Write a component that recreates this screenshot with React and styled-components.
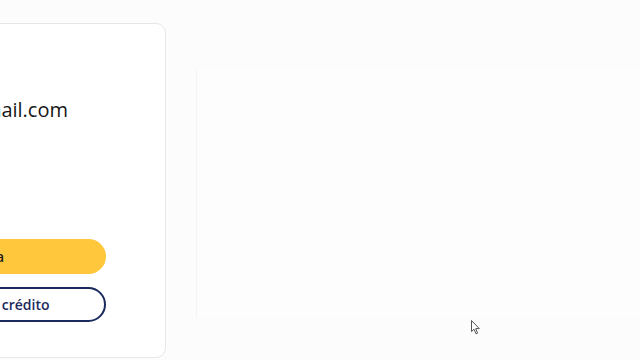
import React from "react";
import styled, { createGlobalStyle } from "styled-components";

const Global = createGlobalStyle`
  html, body {
    margin: 0;
    padding: 0;
    background: #fcfcfc;
    font-family: "Open Sans", "Liberation Sans", sans-serif;
    overflow: hidden;
  }
`;

const Page = styled.main`
  position: relative;
  width: 640px;
  height: 360px;
  display: flex;
  align-items: flex-start;
  padding-top: 23px;
  box-sizing: border-box;
  overflow: hidden;
`;

const Card = styled.section`
  flex: none;
  width: 421px;
  height: 335px;
  margin-left: -255px;
  box-sizing: border-box;
  background: #fff;
  border: 1px solid #e6e6e6;
  border-radius: 10px;
  padding: 72px 59px 35px 64px;
  display: flex;
  flex-direction: column;
`;

const Email = styled.p`
  margin: 0;
  padding-right: 38px;
  font-size: 20px;
  line-height: 28px;
  color: #161616;
  text-align: right;
`;

const Actions = styled.div`
  margin-top: auto;
  display: flex;
  flex-direction: column;
  gap: 13px;
`;

const Button = styled.button`
  height: 35px;
  border-radius: 18px;
  font-family: inherit;
  font-size: 14px;
  font-weight: 600;
  cursor: pointer;
  box-sizing: border-box;
  background: ${(p) => (p.$primary ? "#ffc73b" : "#fff")};
  color: ${(p) => (p.$primary ? "#1f1f1f" : "#1b2a5c")};
  border: ${(p) => (p.$primary ? "none" : "2px solid #1b2a5c")};
`;

const Panel = styled.aside`
  flex: 1;
  margin-left: 30px;
  margin-top: 47px;
  height: 248px;
  border-left: 1px solid #f3f3f3;
  background: #fdfdfd;
`;

const Cursor = styled.svg`
  position: absolute;
  left: 471px;
  top: 320px;
`;

export default function App() {
  return (
    <>
      <Global />
      <Page>
        <Card>
          <Email>mariana.souza@gmail.com</Email>
          <Actions>
            <Button $primary>Assinar agora</Button>
            <Button>Adicionar cartão de crédito</Button>
          </Actions>
        </Card>
        <Panel />
        <Cursor width="10" height="15" viewBox="0 0 10 15">
          <path
            d="M0.5 0.5 L0.5 11.5 L3 9.2 L5 13.8 L6.6 13.1 L4.7 8.6 L8.3 8.6 Z"
            fill="#fff"
            stroke="#555"
            strokeWidth="1"
            strokeLinejoin="round"
          />
        </Cursor>
      </Page>
    </>
  );
}
